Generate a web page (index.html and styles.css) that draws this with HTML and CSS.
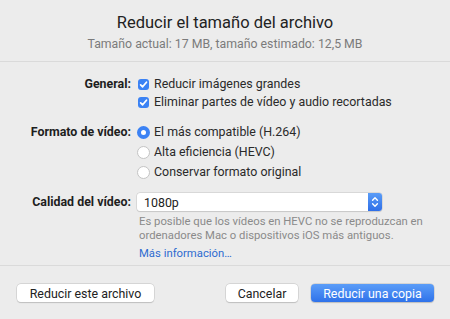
FILE: index.html
```html
<!doctype html>
<html>
  <head>
    <meta charset=utf-8>
    <title>Reducir el tamaño del archivo</title>
    <link rel="stylesheet" href="styles.css">
  </head>
  <body>
    <div class="dialog">
      <div class="header">
        <h1 class="title">Reducir el tamaño del archivo</h1>
        <p class="subtitle">Tamaño actual: 17 MB, tamaño estimado: 12,5 MB</p>
      </div>

      <div class="form">
        <div class="label">General:</div>
        <div class="opts opts-check">
          <label class="opt"><span class="check on"><svg viewBox="0 0 10 10"><path d="M2.4 5.3 L4.2 7.1 L7.7 2.9" /></svg></span>Reducir imágenes grandes</label>
          <label class="opt"><span class="check on"><svg viewBox="0 0 10 10"><path d="M2.4 5.3 L4.2 7.1 L7.7 2.9" /></svg></span>Eliminar partes de vídeo y audio recortadas</label>
        </div>

        <div class="label label-radio">Formato de vídeo:</div>
        <div class="opts opts-radio">
          <label class="opt"><span class="radio on"></span>El más compatible (H.264)</label>
          <label class="opt"><span class="radio"></span>Alta eficiencia (HEVC)</label>
          <label class="opt"><span class="radio"></span>Conservar formato original</label>
        </div>

        <div class="label label-select">Calidad del vídeo:</div>
        <div class="quality">
          <div class="select">
            <span class="select-value">1080p</span>
            <span class="stepper"><svg viewBox="0 0 14 18"><path d="M4.6 7.2 L7 4.8 L9.4 7.2 M4.6 10.8 L7 13.2 L9.4 10.8" /></svg></span>
          </div>
          <p class="note">Es posible que los vídeos en HEVC no se reproduzcan en<br>ordenadores Mac o dispositivos iOS más antiguos.</p>
          <a class="more" href="##">Más información…</a>
        </div>
      </div>

      <div class="footer">
        <button class="btn btn-file">Reducir este archivo</button>
        <div class="spacer"></div>
        <button class="btn btn-cancel">Cancelar</button>
        <button class="btn btn-primary">Reducir una copia</button>
      </div>
    </div>
  </body>
</html>
```

FILE: styles.css
```css
*{
  box-sizing:border-box;
}
body{
  margin:0;
  background:#ececec;
  font-family:Roboto, "Liberation Sans", sans-serif;
  color:#262626;
}
.dialog{
  width:450px;
  height:319px;
}

.header{
  text-align:center;
  padding-top:13px;
  height:62px;
  border-bottom:1px solid #dadada;
}
.title{
  margin:0;
  font-size:16.5px;
  font-weight:400;
  line-height:20px;
  color:#222;
}
.subtitle{
  margin:4px 0 0;
  font-size:12.3px;
  line-height:15px;
  color:#7b7b7b;
}

.form{
  display:grid;
  grid-template-columns:131px 1fr;
  column-gap:6px;
  padding-top:13px;
  height:204px;
  border-bottom:1px solid #dadada;
  font-size:12.4px;
}
.label{
  text-align:right;
  font-weight:700;
  line-height:18px;
  color:#1e1e1e;
}
.label-radio{
  margin-top:7px;
  line-height:20px;
}
.label-select{
  margin-top:7px;
}
.opts{
  display:flex;
  flex-direction:column;
}
.opts-radio{
  margin-top:7px;
}
.opts-radio .opt{
  height:20px;
}
.opt{
  display:flex;
  align-items:center;
  height:18px;
  line-height:18px;
  color:#2a2a2a;
}
.check{
  width:11px;
  height:11px;
  border-radius:3px;
  background:#3b82f4;
  margin:0 5px 0 1px;
  display:flex;
}
.check svg{
  width:11px;
  height:11px;
  fill:none;
  stroke:#fff;
  stroke-width:1.6;
  stroke-linecap:round;
  stroke-linejoin:round;
}
.radio{
  width:13px;
  height:13px;
  border-radius:50%;
  background:#fff;
  border:1px solid #c4c4c4;
  margin-right:4px;
}
.radio.on{
  border:4px solid #3b82f4;
  background:#fff;
}

.quality{
  margin-top:7px;
}
.select{
  width:245px;
  height:18px;
  background:#fff;
  border-radius:3px;
  box-shadow:0 0 0 0.5px #c8c8c8, 0 0.5px 1px rgba(0,0,0,0.15);
  display:flex;
  align-items:center;
}
.select-value{
  flex:1;
  padding-left:7px;
  color:#222;
}
.stepper{
  width:14px;
  height:18px;
  background:linear-gradient(#5a9cf7, #2f6fe8);
  border-radius:0 3px 3px 0;
}
.stepper svg{
  width:14px;
  height:18px;
  fill:none;
  stroke:#fff;
  stroke-width:1.4;
  stroke-linecap:round;
  stroke-linejoin:round;
}
.note{
  margin:4px 0 0 2px;
  font-size:11.3px;
  line-height:14px;
  color:#8a8a8a;
  white-space:nowrap;
}
.more{
  display:block;
  margin:4px 0 0 2px;
  font-size:11.3px;
  line-height:14px;
  color:#2c6bd0;
  text-decoration:none;
}

.footer{
  display:flex;
  align-items:center;
  padding:18px 16px 0 17px;
  gap:13px;
}
.spacer{
  flex:1;
}
.btn{
  font-family:inherit;
  font-size:12.4px;
  height:18px;
  padding:0;
  border:none;
  border-radius:4px;
  background:#fff;
  color:#222;
  white-space:nowrap;
  box-shadow:0 0 0 0.5px #c4c4c4, 0 0.5px 1px rgba(0,0,0,0.2);
}
.btn-file{
  width:137px;
}
.btn-cancel{
  width:72px;
}
.btn-primary{
  background:linear-gradient(#5b9df8, #2f72ea);
  color:#fff;
  width:123px;
}
```
